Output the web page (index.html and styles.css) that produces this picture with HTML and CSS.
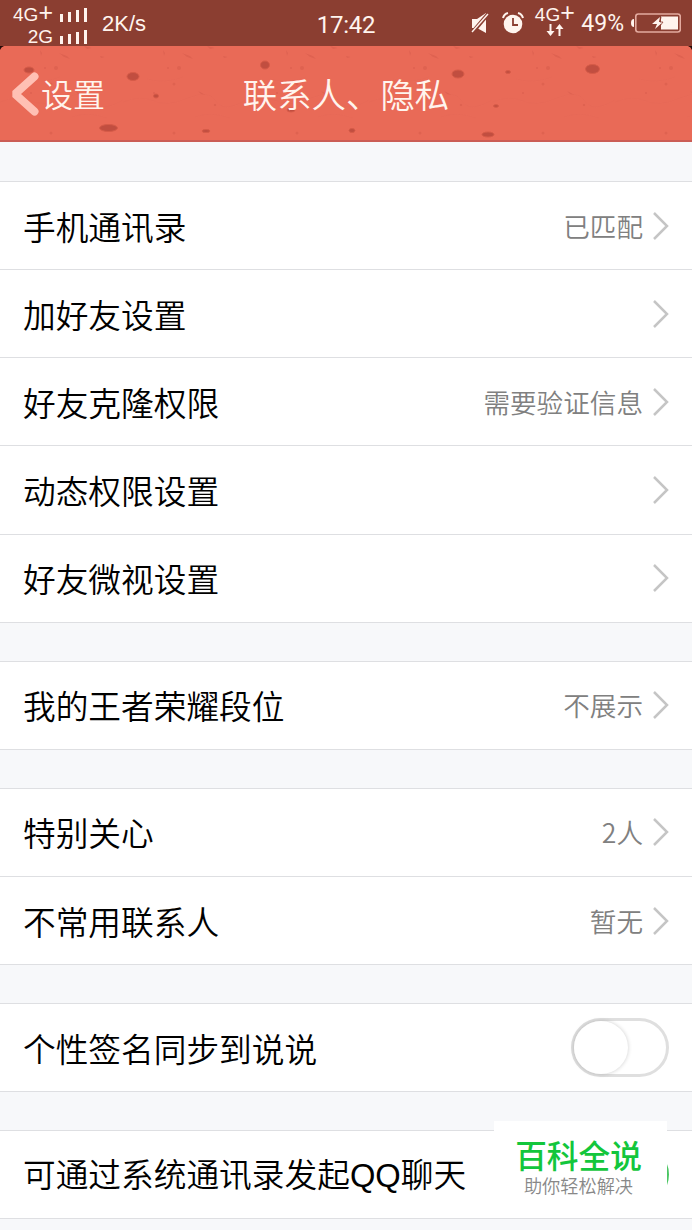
FILE: index.html
```html
<!DOCTYPE html>
<html lang="zh-CN">
<head>
    <meta charset="UTF-8">
    <meta name="viewport" content="width=device-width, initial-scale=1.0">
    <title>联系人、隐私</title>
    <link rel="stylesheet" href="styles.css">
</head>
<body>

<div class="status-bar">
    <div class="carriers">
        <div class="carrier">
            <span>4G<span class="plus">+</span></span>
            <svg width="27" height="14" viewBox="0 0 27 14"><path d="M0 6h3v8H0zM8 4h3v10H8zM16 2h3v12h-3zM24 0h3v14h-3z" fill="#fff4ee"/></svg>
        </div>
        <div class="carrier">
            <span>2G</span>
            <svg width="27" height="14" viewBox="0 0 27 14"><path d="M0 6h3v8H0zM8 4h3v10H8zM16 2h3v12h-3zM24 0h3v14h-3z" fill="#fff4ee"/></svg>
        </div>
    </div>
    <span class="speed">2K/s</span>
    <span class="time">17:42</span>
    <div class="status-icons">
        <svg class="mute" width="18" height="21" viewBox="0 0 18 21">
            <path d="M1 6h5l9-6v20l-9-5H1z" fill="#fff4ee"/>
            <path d="M1 20L17 1" stroke="#8b3e31" stroke-width="4"/>
            <path d="M1 19L17 1" stroke="#fff4ee" stroke-width="1.4"/>
        </svg>
        <svg class="alarm" width="22" height="22" viewBox="0 0 22 22">
            <circle cx="11" cy="12" r="9.3" fill="#fff4ee"/>
            <path d="M1 6Q2 2 6 1M16 1q4 1 5 5" fill="none" stroke="#fff4ee" stroke-width="2"/>
            <path d="M11 6v7h5" fill="none" stroke="#8b3e31" stroke-width="1.8"/>
        </svg>
        <div class="network">
            <span>4G<span class="plus">+</span></span>
            <svg width="18" height="12" viewBox="0 0 18 12">
                <path d="M3.500 0h2v7h3l-4 5-4-5h3zM12.500 12h2V5h3l-4-5-4 5h3z" fill="#fff4ee"/>
            </svg>
        </div>
        <span class="percent">49%</span>
        <svg class="battery" width="50" height="20" viewBox="0 0 50 20">
            <path d="M3 6v8Q0 14 0 10t3-4z" fill="#fff4ee"/>
            <rect x="4.800" y="1" width="44.500" height="18" rx="2.500" fill="none" stroke="#e3aa9f" stroke-width="1.600"/>
            <path d="M30 3.500h17v13H30z" fill="#fff4ee"/>
            <path d="M29 4l-8 7h5l-2 5 8-7h-4z" fill="#fff4ee"/>
            <path d="M30 4l-1 5h3l-3 4" fill="none" stroke="#8b3e31" stroke-width="0.800"/>
        </svg>
    </div>
</div>

<header class="nav-bar">
    <svg class="texture" width="692" height="96" viewBox="0 0 692 96">
        <defs>
            <pattern id="specks" width="123" height="96" patternUnits="userSpaceOnUse">
                <g fill="#ce5345" opacity="0.400">
                    <path d="M59 7l8 3 3 3-6-2zM84 0l8 2-5 1zM75 45l8 4-5-1z"/>
                    <circle cx="56" cy="22" r="2"/>
                    <circle cx="45" cy="22" r="1"/>
                    <circle cx="51" cy="38" r="1.500"/>
                    <circle cx="92" cy="59" r="1.300"/>
                    <circle cx="51" cy="87" r="1.500"/>
                    <circle cx="31" cy="47" r="1"/>
                    <path d="M40 4l2 3-1 3zM100 10l5 1-4 1z"/>
                </g>
                <path d="M0 56q18-7 31-1t34-3 28 3 30-1M24 33q18 5 36-2M72 71q15-6 35 1" fill="none" stroke="#dc5d4d" opacity="0.150"/>
            </pattern>
        </defs>
        <rect width="692" height="96" fill="url(#specks)"/>
        <g fill="#c14e40" stroke="#d65b48" stroke-width="1">
            <ellipse cx="29" cy="24" rx="5" ry="3"/>
            <ellipse cx="133" cy="30.500" rx="6" ry="4"/>
            <ellipse cx="156" cy="50" rx="2.500" ry="2"/>
            <ellipse cx="108.500" cy="82" rx="9" ry="3.500"/>
            <ellipse cx="206" cy="85" rx="4" ry="1.500"/>
            <ellipse cx="265" cy="19" rx="4.500" ry="4"/>
            <ellipse cx="291" cy="64" rx="4" ry="2"/>
            <ellipse cx="352" cy="84.500" rx="3" ry="2"/>
            <ellipse cx="458" cy="28" rx="6" ry="4"/>
            <ellipse cx="508" cy="26" rx="2.500" ry="1.500"/>
            <ellipse cx="592.500" cy="23" rx="7" ry="4.500"/>
            <ellipse cx="496" cy="60" rx="2.500" ry="1.300"/>
            <ellipse cx="488" cy="88.500" rx="6" ry="2.500"/>
        </g>
        <path d="M0 0h4Q1 1 0 4zM692 0h-4q3 1 4 4z" fill="#260b08"/>
    </svg>
    <a class="back" href="#">
        <svg width="29" height="44" viewBox="0 0 29 44"><path d="M22.500 4.500L3 22l19.500 17.500" fill="none" stroke="#ffc0b4" stroke-width="8" stroke-linecap="round" stroke-linejoin="bevel"/></svg>
        <span>设置</span>
    </a>
    <h1>联系人、隐私</h1>
</header>

<main>
    <section class="group">
        <div class="row">
            <span class="label">手机通讯录</span>
            <span class="value">已匹配</span>
            <svg class="arrow" viewBox="0 0 16 28"><path d="M1 1l13 13L1 27"/></svg>
        </div>
        <div class="row">
            <span class="label">加好友设置</span>
            <svg class="arrow" viewBox="0 0 16 28"><path d="M1 1l13 13L1 27"/></svg>
        </div>
        <div class="row">
            <span class="label">好友克隆权限</span>
            <span class="value">需要验证信息</span>
            <svg class="arrow" viewBox="0 0 16 28"><path d="M1 1l13 13L1 27"/></svg>
        </div>
        <div class="row">
            <span class="label">动态权限设置</span>
            <svg class="arrow" viewBox="0 0 16 28"><path d="M1 1l13 13L1 27"/></svg>
        </div>
        <div class="row">
            <span class="label">好友微视设置</span>
            <svg class="arrow" viewBox="0 0 16 28"><path d="M1 1l13 13L1 27"/></svg>
        </div>
    </section>

    <section class="group">
        <div class="row">
            <span class="label">我的王者荣耀段位</span>
            <span class="value">不展示</span>
            <svg class="arrow" viewBox="0 0 16 28"><path d="M1 1l13 13L1 27"/></svg>
        </div>
    </section>

    <section class="group">
        <div class="row">
            <span class="label">特别关心</span>
            <span class="value">2人</span>
            <svg class="arrow" viewBox="0 0 16 28"><path d="M1 1l13 13L1 27"/></svg>
        </div>
        <div class="row">
            <span class="label">不常用联系人</span>
            <span class="value">暂无</span>
            <svg class="arrow" viewBox="0 0 16 28"><path d="M1 1l13 13L1 27"/></svg>
        </div>
    </section>

    <section class="group">
        <div class="row">
            <span class="label">个性签名同步到说说</span>
            <span class="switch"><span class="knob"></span></span>
        </div>
    </section>

    <section class="group">
        <div class="row">
            <span class="label">可通过系统通讯录发起<span class="latin">QQ</span>聊天</span>
            <span class="switch on"><span class="knob"></span></span>
        </div>
    </section>
</main>

<div class="badge">
    <strong>百科全说</strong>
    <span>助你轻松解决</span>
</div>

</body>
</html>
```

FILE: styles.css
```css
:root {
    --status: #8b3e31;
    --header: #e96a57;
    --bg: #f7f8fa;
    --line: #dedfe2;
    --light: #fff4ee;
}

* {
    margin: 0;
    padding: 0;
    box-sizing: border-box;
}

body {
    position: relative;
    height: 1230px;
    overflow: hidden;
    font-family: 'Noto Sans CJK SC', sans-serif;
    background: var(--bg);
    color: #000;
}

svg {
    display: block;
    flex-shrink: 0;
}

/* Status bar */
.status-bar {
    display: grid;
    grid-template-columns: 87px 229px 60px 1fr;
    height: 46px;
    background: var(--status);
    color: var(--light);
    font-family: Roboto, sans-serif;
}

.carriers {
    padding-top: 4px;
}

.carrier {
    display: flex;
    justify-content: flex-end;
    align-items: center;
    gap: 7px;
    height: 22px;
    font-family: 'Liberation Sans', sans-serif;
    font-size: 19px;
    line-height: 22px;
}

.plus {
    font-size: 25px;
    line-height: 1px;
}

.speed {
    padding-left: 15px;
    font-family: 'Liberation Sans', sans-serif;
    font-size: 22px;
    line-height: 48px;
}

.time {
    font-size: 24px;
    line-height: 50px;
    letter-spacing: -0.3px;
    text-align: center;
    white-space: nowrap;
}

.status-icons {
    display: flex;
    justify-content: flex-end;
    padding-right: 11px;
}

.mute {
    margin: 13px 13px 0 0;
}

.alarm {
    margin: 12px 10px 0 0;
}

.network {
    display: flex;
    flex-direction: column;
    align-items: center;
    width: 41px;
    padding-top: 5px;
    font-family: 'Liberation Sans', sans-serif;
    font-size: 19px;
    line-height: 19px;
}

.percent {
    margin: 0 7px 0 6px;
    font-size: 23px;
    line-height: 48px;
}

.battery {
    margin-top: 13px;
}

/* Title bar */
.nav-bar {
    position: relative;
    display: grid;
    grid-template-columns: 1fr auto 1fr;
    align-items: center;
    height: 96px;
    background: var(--header);
    border-bottom: 2px solid #cb5d55;
    color: var(--light);
}

.texture {
    position: absolute;
    top: 0;
    left: 0;
}

.back {
    position: relative;
    display: flex;
    align-items: center;
    padding-left: 12px;
    color: inherit;
    font-size: 32px;
    font-weight: 350;
    line-height: 48px;
    text-decoration: none;
}

.back svg {
    margin-top: 2px;
}

.nav-bar h1 {
    position: relative;
    font-size: 34.4px;
    font-weight: 350;
    line-height: 50px;
}

/* Settings list */
.group {
    margin-top: 38px;
    background: #fff;
    border-bottom: 1px solid var(--line);
}

.group:first-child {
    margin-top: 39px;
}

.row {
    display: flex;
    align-items: center;
    height: 88.15px;
    padding: 0 23px;
    border-top: 1px solid var(--line);
}

.label {
    margin-right: auto;
    font-size: 32.7px;
    font-weight: 350;
    line-height: 48px;
    white-space: nowrap;
}

.latin {
    font-family: 'Liberation Sans', sans-serif;
}

.value {
    color: #808080;
    font-size: 26.6px;
    font-weight: 350;
    line-height: 40px;
}

.arrow {
    width: 16px;
    height: 28px;
    margin-left: 10px;
    fill: none;
    stroke: #c5c5c5;
    stroke-width: 2.5;
}

.switch {
    flex-shrink: 0;
    width: 98px;
    height: 59px;
    border: 3px solid #dfdfdf;
    border-radius: 30px;
}

.knob {
    display: block;
    width: 54px;
    height: 53px;
    border-radius: 50%;
    background: #fff;
    box-shadow: 0 0 4px rgba(0, 0, 0, 0.2);
}

.switch.on {
    background: #4cc764;
    border-color: #4cc764;
}

.switch.on .knob {
    margin-left: 36px;
}

/* Corner badge over the list */
.badge {
    position: absolute;
    top: 1121px;
    left: 494px;
    display: flex;
    flex-direction: column;
    align-items: center;
    width: 173px;
    height: 84px;
    padding: 12px 4px 0 0;
    background: #fff;
}

.badge strong {
    color: #13c63c;
    font-size: 31.7px;
    font-weight: 500;
    line-height: 42px;
}

.badge span {
    color: #888;
    font-size: 18.2px;
    font-weight: 350;
    line-height: 20px;
}
```
